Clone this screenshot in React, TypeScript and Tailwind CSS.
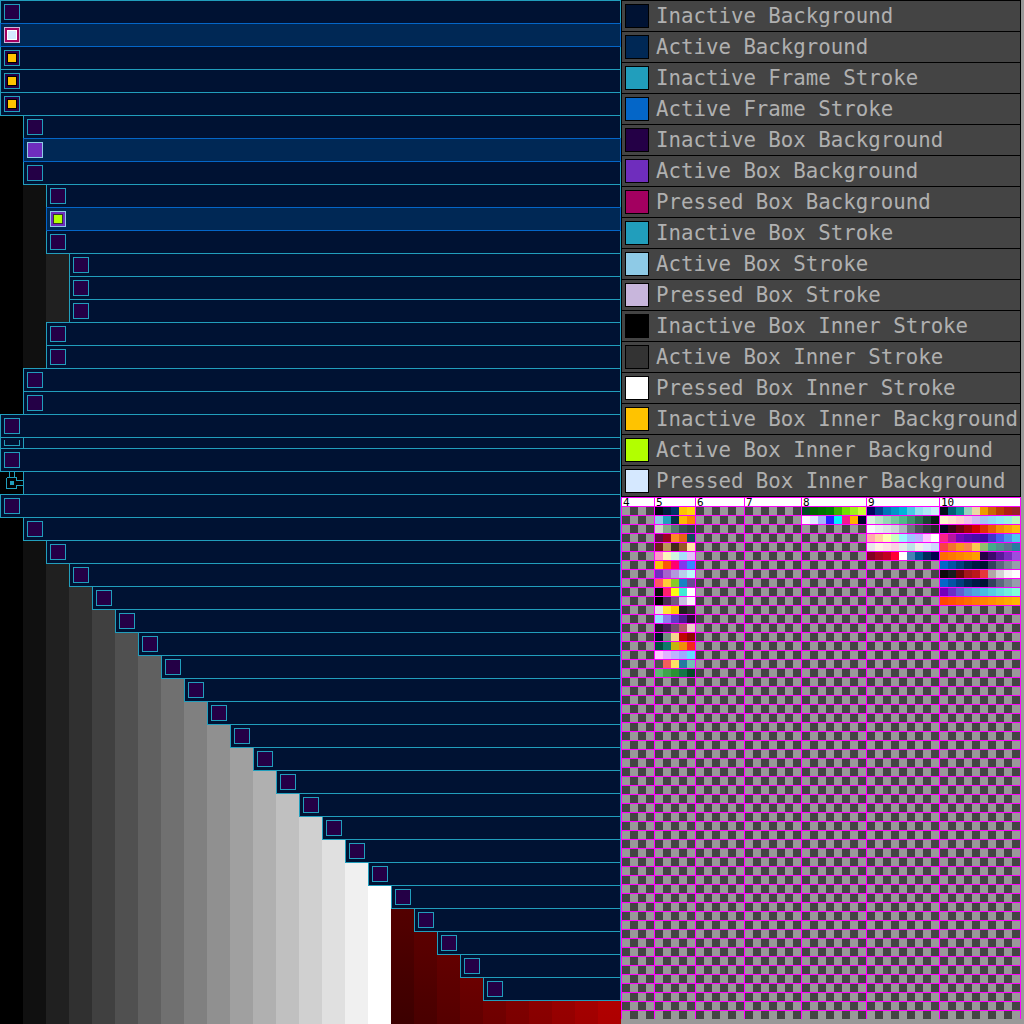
import React from "react";

type Kind = "off" | "on" | "active" | "pressed" | "activeOn" | "clip" | "none";
type Row = { indent: number; kind?: Kind; short?: boolean; glyph?: boolean };

const rows: Row[] = [
  { indent: 0 },
  { indent: 0, kind: "pressed" },
  { indent: 0, kind: "on" },
  { indent: 0, kind: "on" },
  { indent: 0, kind: "on" },
  { indent: 1 },
  { indent: 1, kind: "active" },
  { indent: 1 },
  { indent: 2 },
  { indent: 2, kind: "activeOn" },
  { indent: 2 },
  { indent: 3 },
  { indent: 3 },
  { indent: 3 },
  { indent: 2 },
  { indent: 2 },
  { indent: 1 },
  { indent: 1 },
  { indent: 0 },
  { indent: 0, kind: "clip", short: true },
  { indent: 0 },
  { indent: 1, glyph: true, kind: "none" },
  { indent: 0 },
  ...Array.from({ length: 21 }, (_, i) => ({ indent: i + 1 })),
];

const legend: [string, string][] = [
  ["Inactive Background", "#001233"],
  ["Active Background", "#002855"],
  ["Inactive Frame Stroke", "#219ebc"],
  ["Active Frame Stroke", "#0466c8"],
  ["Inactive Box Background", "#240046"],
  ["Active Box Background", "#6f2dbd"],
  ["Pressed Box Background", "#a30060"],
  ["Inactive Box Stroke", "#219ebc"],
  ["Active Box Stroke", "#8ecae6"],
  ["Pressed Box Stroke", "#c8b6dc"],
  ["Inactive Box Inner Stroke", "#000000"],
  ["Active Box Inner Stroke", "#333333"],
  ["Pressed Box Inner Stroke", "#ffffff"],
  ["Inactive Box Inner Background", "#ffc300"],
  ["Active Box Inner Background", "#b2ff00"],
  ["Pressed Box Inner Background", "#d5e8ff"],
];

const sw: Record<number, string[]> = {
  5: [
    "000814 001d3d 003566 ffc300 ffd60a",
    "8ecae6 219ebc 023047 ffb703 fb8500",
    "cad2c5 84a98c 52796f 354f52 2f3e46",
    "5f0f40 9a031e fb8b24 e36414 0f4c5c",
    "6f1d1b bb9457 432818 99582a ffe6a7",
    "ff99c8 fcf6bd d0f4de a9def9 e4c1f9",
    "ffbe0b fb5607 ff006e 8338ec 3a86ff",
    "6f2dbd a663cc b298dc b8d0eb b9faf8",
    "ff595e ffca3a 8ac926 1982c4 6a4c93",
    "0c0f0a ff206e fbff12 41ead4 ffffff",
    "000000 4a2c4f 735a7e c8bfe0 f8f4f9",
    "e2e2e2 ffe138 ffc800 1f1f1f 333333",
    "98ddff 8e7dee 5f3dc4 4b1d8f 2d0a3a",
    "22162b 451f55 724e6e b55a6d efd0ca",
    "001427 708d81 f4d58d bf0603 8d0801",
    "004e3c 0f7a6b c5b50f f18f0a f52a1c",
    "ffc6ff e0b0ff bdb2ff a0a8ff 66d9ff",
    "50514f f25f5c ffe066 247ba0 70c1b3",
    "5bba6f 3fa34d 2a9134 137547 054a29",
  ],
  8: [
    "004b23 006400 007200 008000 38b000 70e000 9ef01a ccff33",
    "f8f7ff e0e7ff a5b4fc 2323ff 00f0ff f01b8e ffb000 03002e",
  ],
  9: [
    "03045e 023e8a 0077b6 0096c7 00b4d8 48cae4 90e0ef ade8f4 caf0f8",
    "d8f3dc b7e4c7 95d5b2 74c69d 52b788 40916c 2d6a4f 1b4332 081c15",
    "f8f9fa e9ecef dee2e6 ced4da adb5bd 6c757d 495057 343a40 212529",
    "ffadad ffd6a5 fdffb6 caffbf 9bf6ff a0c4ff bdb2ff ffc6ff fffffc",
    "eae4e9 fff1e6 fde2e4 fad2e1 e2ece9 bee1e6 f0efeb dfe7fd cddafd",
    "800020 a4031f c00020 ff0033 ffffff 4682b4 00558f 002a5c 00004f",
  ],
  10: [
    "001219 005f73 0a9396 94d2bd e9d8a6 ee9b00 ca6702 bb3e03 ae2012 9b2226",
    "fbf8cc fde4cf ffcfd2 f1c0e8 cfbaf0 a3c4f3 90dbf4 8eecf5 98f5e1 b9fbc0",
    "03071e 370617 6a040f 9d0208 d00000 dc2f02 e85d04 f48c06 faa307 ffba08",
    "f72585 b5179e 7209b7 560bad 480ca8 3a0ca3 3f37c9 4361ee 4895ef 4cc9f0",
    "f94144 f3722c f8961e f9844a f9c74f 90be6d 43aa8b 4d908e 577590 277da1",
    "ff6d00 ff7900 ff8500 ff9100 ff9e00 240046 3c096c 5a189a 7b2cbf 9d4edd",
    "0466c8 0353a4 023e7d 002855 001845 001233 33415c 5c677d 7d8597 979dac",
    "0b090a 161a1d 660708 a4161a ba181b e5383b b1a7a6 d3d3d3 f5f3f4 ffffff",
    "0466c8 0353a4 023e7d 002855 001845 001233 33415c 5c677d 7d8597 979dac",
    "7400b8 6930c3 5e60ce 5390d9 4ea8de 48bfe3 56cfe1 64dfdf 72efdd 80ffdb",
    "ff4800 ff5400 ff6000 ff6d00 ff7900 ff8500 ff9100 ff9e00 ffaa00 ffb600",
  ],
};

const starts: Record<number, number> = { 4: 0, 5: 4, 6: 9, 7: 15, 8: 22, 9: 30, 10: 39 };

function columnFill(col: number, y: number, h: number): string {
  if (col <= 16) {
    const v = Math.min(255, col * 16);
    return `rgb(${v},${v},${v})`;
  }
  const r = (yy: number) => Math.round(60 + (col - 17) * 12.5 + (1024 - yy) * 0.2);
  return `linear-gradient(rgb(${r(y)},0,0),rgb(${r(y + h)},0,0))`;
}

function Box({ kind }: { kind: Kind }) {
  if (kind === "none") return null;
  if (kind === "clip") {
    return <div className="h-[6px] w-[16px] -mt-[1px] border-x border-b border-[#219ebc]" />;
  }
  const pressed = kind === "pressed";
  const act = kind === "active" || kind === "activeOn";
  const inner = kind !== "off" && kind !== "active";
  return (
    <div
      className={
        "flex h-[16px] w-[16px] items-center justify-center border " +
        (pressed
          ? "border-[#c8b6dc] bg-[#a30060]"
          : act
            ? "border-[#8ecae6] bg-[#6f2dbd]"
            : "border-[#219ebc] bg-[#240046]")
      }
    >
      {inner && (
        <div
          className={
            "h-[10px] w-[10px] border " +
            (pressed
              ? "border-white bg-[#d5e8ff]"
              : kind === "activeOn"
                ? "border-[#333333] bg-[#b2ff00]"
                : "border-black bg-[#ffc300]")
          }
        />
      )}
    </div>
  );
}

function TreeGlyph() {
  return (
    <svg width="23" height="23" viewBox="0 0 23 23" className="block" shapeRendering="crispEdges">
      <path
        d="M9.5 0V6M14.5 0V6M6.5 6.5H16.5V9.5H23M23 14.5H16.5V17.5H6.5V6.5"
        fill="none"
        stroke="#219ebc"
        strokeWidth="1"
      />
      <rect x="10" y="10" width="4" height="4" fill="#219ebc" />
    </svg>
  );
}

function TreeRow({ row, y }: { row: Row; y: number }) {
  const kind: Kind = row.kind ?? "off";
  const h = row.short ? 11 : 23;
  const highlighted = kind === "pressed" || kind === "active" || kind === "activeOn";
  return (
    <div className={"flex items-start " + (row.short ? "h-[11px]" : "h-[23px]")}>
      {Array.from({ length: row.indent }, (_, c) => (
        <div key={c} className="h-full w-[23px] shrink-0" style={{ background: columnFill(c, y, h) }}>
          {row.glyph && c === 0 && <TreeGlyph />}
        </div>
      ))}
      <div
        className={
          "relative flex min-w-0 flex-1 items-start border p-[3px] " +
          (row.short ? "h-[12px] " : "h-[24px] ") +
          (highlighted ? "z-10 border-[#0466c8] bg-[#002855]" : "border-[#219ebc] bg-[#001233]")
        }
      >
        <Box kind={kind} />
        {kind === "clip" && <div className="absolute left-[22px] top-0 h-full w-px bg-[#219ebc]" />}
      </div>
    </div>
  );
}

function Tree() {
  let y = 0;
  const els = rows.map((r, i) => {
    const el = <TreeRow key={i} row={r} y={y} />;
    y += r.short ? 11 : 23;
    return el;
  });
  return (
    <div className="flex w-[621px] shrink-0 flex-col">
      {els}
      <div className="flex h-[24px]">
        {Array.from({ length: 27 }, (_, c) => (
          <div key={c} className="h-full w-[23px]" style={{ background: columnFill(c, 1000, 24) }} />
        ))}
      </div>
    </div>
  );
}

function Legend() {
  return (
    <div className="flex flex-col border-x border-b border-black">
      {legend.map(([name, color]) => (
        <div key={name} className="flex h-[31px] items-center gap-[7px] border-t border-black bg-[#444444] pl-[3px]">
          <div className="h-[24px] w-[24px] shrink-0 border border-black" style={{ background: color }} />
          <span className="whitespace-nowrap font-['DejaVu_Sans_Mono',monospace] text-[20.74px] leading-none text-[#b0b0b0]">
            {name}
          </span>
        </div>
      ))}
    </div>
  );
}

function Atlas() {
  const cols = [4, 5, 6, 7, 8, 9, 10];
  return (
    <div className="flex gap-px bg-[#ff00ff] p-px pb-0">
      {cols.map((n) => (
        <div key={n} className="flex flex-col gap-px">
          <div
            className="h-[8px] overflow-visible bg-white pl-px font-['DejaVu_Sans_Mono',monospace] text-[11px] leading-[9px] text-black"
            style={{ width: n * 8 }}
          >
            {n}
          </div>
          {Array.from({ length: 57 }, (_, j) => {
            const data = sw[n]?.[j]?.split(" ");
            return (
              <div key={j} className="flex h-[8px]">
                {Array.from({ length: n }, (_, i) =>
                  data ? (
                    <div key={i} className="h-[8px] w-[8px]" style={{ background: "#" + data[i] }} />
                  ) : (
                    <div
                      key={i}
                      className={
                        "h-[8px] w-[8px] " +
                        ((starts[n] + i + j) % 2 === 0 ? "bg-[#999999]" : "bg-[#444444]")
                      }
                    />
                  ),
                )}
              </div>
            );
          })}
        </div>
      ))}
    </div>
  );
}

export default function App() {
  return (
    <div className="flex h-[1024px] w-[1024px] overflow-hidden bg-[#999999]">
      <Tree />
      <div className="flex w-[400px] shrink-0 flex-col">
        <Legend />
        <Atlas />
      </div>
    </div>
  );
}
